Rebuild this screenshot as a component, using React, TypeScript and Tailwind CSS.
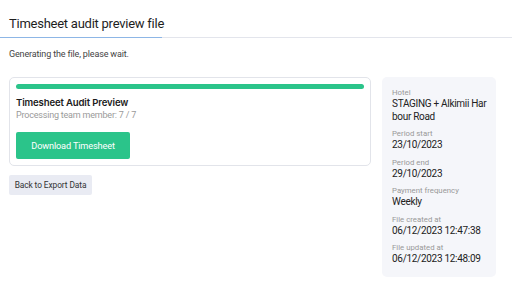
const details = [
  { label: 'Hotel', value: 'STAGING + Alkimii Harbour Road' },
  { label: 'Period start', value: '23/10/2023' },
  { label: 'Period end', value: '29/10/2023' },
  { label: 'Payment frequency', value: 'Weekly' },
  { label: 'File created at', value: '06/12/2023 12:47:38' },
  { label: 'File updated at', value: '06/12/2023 12:48:09' },
];

export default function App() {
  return (
    <div className="w-[512px] h-[287px] bg-white overflow-hidden font-['Roboto',sans-serif] text-[#222]">
      <div className="flex pt-[15px]">
        <div className="pl-[9px] w-[162px] border-b-[1.5px] border-[#8db6e6] pb-[5px]">
          <h1 className="text-[13px] leading-[17px] tracking-[-0.25px] whitespace-nowrap text-[#1e1e1e]">
            Timesheet audit preview file
          </h1>
        </div>
        <div className="flex-1 border-b border-[#e3e5ec]" />
      </div>

      <p className="px-[9px] mt-[10px] text-[9px] leading-[12px] tracking-[-0.15px] text-[#444]">
        Generating the file, please wait.
      </p>

      <div className="flex gap-[11px] pl-[9px] mt-[17px]">
        <div className="w-[362px] flex flex-col">
          <div className="border border-[#e2e4ea] rounded-[5px] px-[6px] pt-[6px] pb-[6px]">
            <div className="h-[5px] rounded-full bg-[#2bc48a]" />
            <div className="mt-[7px] font-['Inter',sans-serif] font-semibold text-[9.6px] leading-[13px] tracking-[-0.15px] text-[#1b1b1b]">
              Timesheet Audit Preview
            </div>
            <div className="text-[9px] leading-[13px] tracking-[-0.2px] text-[#9a9a9a]">Processing team member: 7 / 7</div>
            <button className="mt-[10px] w-[114px] h-[27px] rounded-[2px] bg-[#2bc48a] text-white text-[9.2px] tracking-[-0.15px]">
              Download Timesheet
            </button>
          </div>
          <div className="mt-[5px]">
            <button className="w-[83px] h-[20px] rounded-[2px] bg-[#e9ebf3] text-[8.4px] tracking-[-0.1px] text-[#333]">
              Back to Export Data
            </button>
          </div>
        </div>

        <div className="w-[114px] rounded-[5px] bg-[#f5f6fa] pl-[10px] pr-[6px] py-[11px] flex flex-col gap-[6px]">
          {details.map((d) => (
            <div key={d.label}>
              <div className="text-[7.8px] leading-[10px] text-[#999]">{d.label}</div>
              <div className="text-[10px] leading-[12.5px] tracking-[-0.3px] text-[#222] break-all">{d.value}</div>
            </div>
          ))}
        </div>
      </div>
    </div>
  );
}
